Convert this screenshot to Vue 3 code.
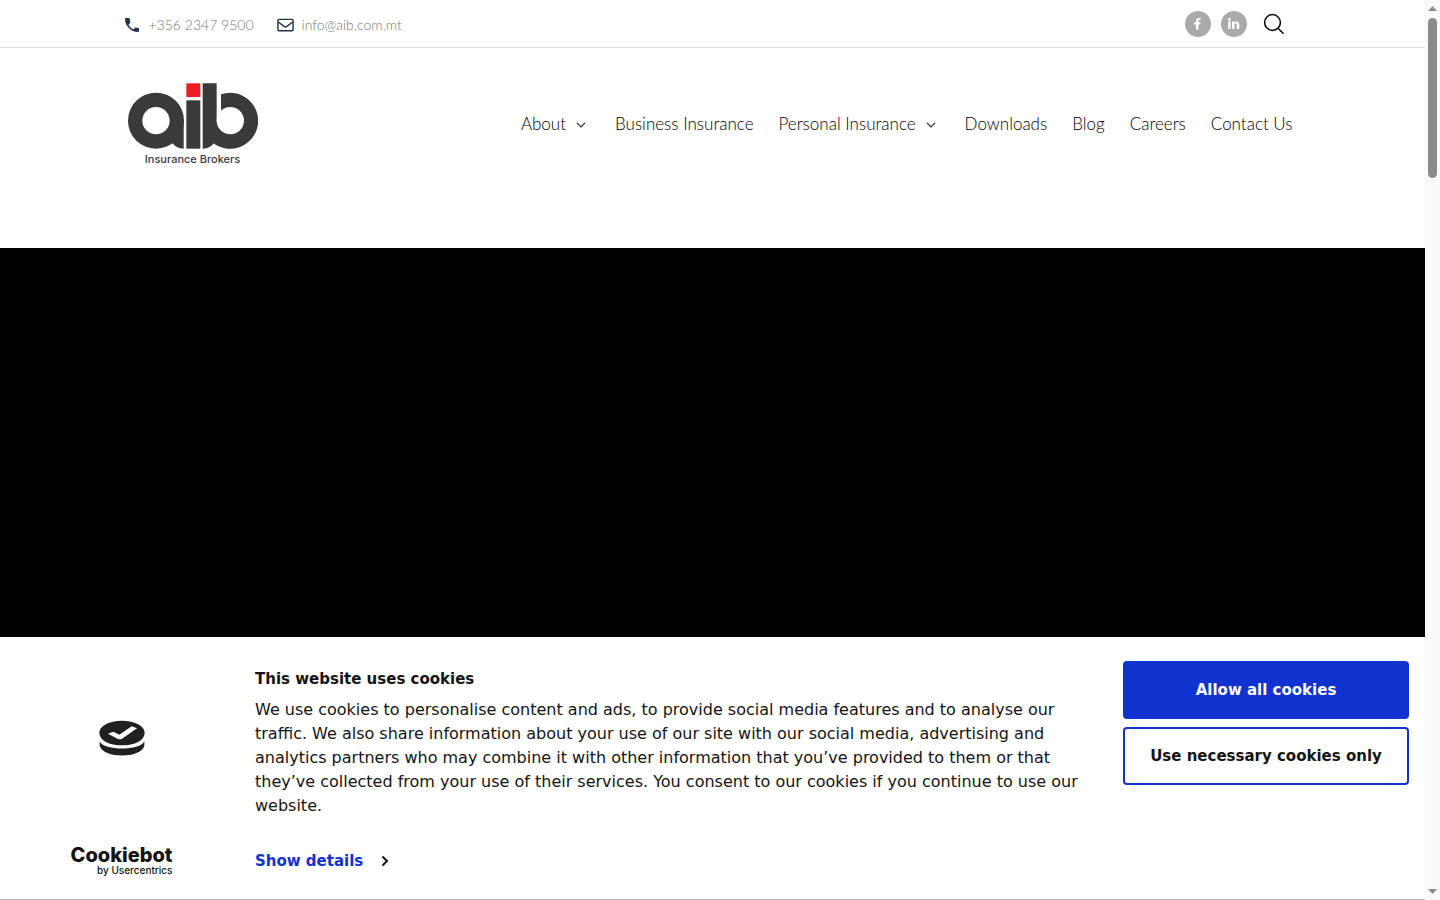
<template>
  <div class="window">
    <div class="page">
      <div class="top-bar">
        <div class="container top-inner">
          <div class="contacts">
            <a class="contact" href="tel:+35623479500">
              <svg class="phone-icon" viewBox="2 2 21.5 21.5" aria-hidden="true">
                <path
                  d="M3.5 2h4.500c.8 0 1.4.6 1.4 1.4 0 1.7.3 3.3.8 4.7.2.5.1 1.1-.3 1.5l-2.400 2.7c1.7 3.2 4.1 5.600 7.300 7.200l2.600-2.600c.4-.4 1-.5 1.500-.3 1.400.5 2.400.6 3.400.7.8 0 1.400.6 1.400 1.400V22c0 .8-.6 1.400-1.400 1.400C11 23.400 2 14 2 3.500 2 2.600 2.700 2 3.500 2z"
                  fill="currentColor"
                />
              </svg>
              +356 2347 9500
            </a>
            <a class="contact" href="mailto:info@aib.com.mt">
              <svg class="mail-icon" viewBox="0 0 18 14" aria-hidden="true">
                <rect x="1" y="1" width="16" height="12" rx="1" />
                <path d="M1 3.500 7.500 8.500Q9 9.600 10.500 8.500L17 3.500" />
              </svg>
              info@aib.com.mt
            </a>
          </div>
          <div class="tools">
            <a class="social" href="#facebook" aria-label="Facebook">
              <svg viewBox="0 0 26 26" aria-hidden="true">
                <path
                  d="M11 18.500v-5H9v-2.200h2V9.900c0-1.900 1-3 2.900-3h1.600v2.200h-1c-.8 0-1.100.3-1.100 1v1.200h2.200l-.3 2.200h-1.900v5z"
                />
              </svg>
            </a>
            <a class="social" href="#linkedin" aria-label="LinkedIn">
              <svg viewBox="0 0 26 26" aria-hidden="true">
                <circle cx="8.400" cy="8.500" r="1.400" />
                <path
                  d="M7.200 10.600h2.400V18H7.200zM11 10.600h2.300v1c.4-.7 1.200-1.200 2.200-1.200 2.100 0 2.700 1.400 2.700 3.300V18h-2.400v-3.900c0-1.100-.3-1.700-1.100-1.700-1 0-1.300.6-1.300 1.700V18H11z"
                />
              </svg>
            </a>
            <button class="search" type="button" aria-label="Search">
              <svg viewBox="0 0 22 22" aria-hidden="true">
                <circle cx="9.500" cy="9.500" r="7.900" />
                <path d="M15 15.200 20.600 20.800" />
              </svg>
            </button>
          </div>
        </div>
      </div>

      <header class="header">
        <div class="container header-inner">
          <a class="logo" href="#home" aria-label="aib Insurance Brokers">
            <svg viewBox="54 38 390 198" aria-hidden="true">
              <g fill="#3a3a3b">
                <circle cx="138" cy="151" r="84" />
                <path d="M175 151H221V235C205 235 195 228 187 218Z" />
                <path d="M229 90H271V235H229Z" />
                <path d="M278 39H320V200L312 218C304 228 294 235 278 235Z" />
                <path d="M333 72A84 84 0 1 1 312 220L319 151H333Z" />
              </g>
              <path d="M229 39H271V80H229Z" fill="#ee1c25" />
              <circle cx="138" cy="151" r="41" fill="#fff" />
              <circle cx="361" cy="151" r="41" fill="#fff" />
            </svg>
            <span>Insurance Brokers</span>
          </a>
          <nav class="nav">
            <a v-for="item in navItems" :key="item.label" :href="item.href">
              {{ item.label }}
              <svg v-if="item.menu" viewBox="0 0 10 10" aria-hidden="true">
                <path d="M1 4 5 8 9 4" />
              </svg>
            </a>
          </nav>
        </div>
      </header>

      <main class="hero"></main>

      <section class="cookies" aria-labelledby="cookie-title">
        <div class="brand">
          <svg class="cookie-mark" viewBox="0 0 138 108" aria-hidden="true">
            <path d="M2 64C14 93 124 93 136 64V77C126 116 12 116 2 77Z" />
            <path
              fill-rule="evenodd"
              d="M69 2C107 2 137 18 137 38C137 61 107 76 69 76C31 76 1 61 1 38C1 18 31 2 69 2ZM27 41L43 35L61 44L98 19L114 25L69 56Q62 60 55 56Z"
            />
          </svg>
          <a class="brand-name" href="#cookiebot">
            <strong>Cookiebot</strong>
            <span>by Usercentrics</span>
          </a>
        </div>
        <div class="message">
          <h2 id="cookie-title">This website uses cookies</h2>
          <p>
            We use cookies to personalise content and ads, to provide social media features and to
            analyse our traffic. We also share information about your use of our site with our
            social media, advertising and analytics partners who may combine it with other
            information that you’ve provided to them or that they’ve collected from your use of
            their services. You consent to our cookies if you continue to use our website.
          </p>
          <a class="details" href="#details">
            Show details
            <svg viewBox="0 0 8 12" aria-hidden="true">
              <path d="M1.500 1.500 6 6 1.500 10.500" />
            </svg>
          </a>
        </div>
        <div class="choices">
          <button class="choice primary" type="button">Allow all cookies</button>
          <button class="choice" type="button">Use necessary cookies only</button>
        </div>
      </section>
    </div>

    <div class="scrollbar" aria-hidden="true">
      <svg viewBox="0 0 9 5"><path d="M0 5 4.500 0 9 5Z" /></svg>
      <div class="track"><div class="thumb"></div></div>
      <svg viewBox="0 0 9 5"><path d="M0 0 4.500 5 9 0Z" /></svg>
    </div>
  </div>
</template>

<script setup>
const navItems = [
  { label: 'About', href: '#about', menu: true },
  { label: 'Business Insurance', href: '#business' },
  { label: 'Personal Insurance', href: '#personal', menu: true },
  { label: 'Downloads', href: '#downloads' },
  { label: 'Blog', href: '#blog' },
  { label: 'Careers', href: '#careers' },
  { label: 'Contact Us', href: '#contact' }
]
</script>

<style>
body {
  margin: 0;
}
</style>

<style scoped>
* {
  box-sizing: border-box;
}

a {
  color: inherit;
  text-decoration: none;
}

svg {
  display: block;
  flex-shrink: 0;
}

button {
  cursor: pointer;
}

.window {
  display: flex;
  min-height: 100vh;
  background: #ffffff;
  font-family: Lato, sans-serif;
}

.page {
  flex: 1;
  display: flex;
  flex-direction: column;
  border-bottom: 1px solid #b4b4b4;
}

.container {
  width: 100%;
  max-width: 1176px;
  margin: 0 auto;
}

.top-bar {
  border-bottom: 1px solid #dedede;
}

.top-inner {
  display: flex;
  justify-content: space-between;
  align-items: center;
  height: 47px;
}

.contacts {
  display: flex;
  gap: 23px;
  padding-top: 2px;
}

.contact {
  display: flex;
  align-items: center;
  gap: 8px;
  color: #777777;
  font-size: 14px;
  font-weight: 300;
}

.phone-icon {
  width: 14px;
  height: 14px;
  margin-right: 2px;
  color: #20344f;
}

.mail-icon {
  width: 17px;
  height: 14px;
  fill: none;
  stroke: #20344f;
  stroke-width: 1.5;
}

.tools {
  display: flex;
  align-items: center;
  gap: 10px;
  padding-right: 16px;
}

.social {
  width: 26px;
  height: 26px;
  border-radius: 50%;
  background: #aaaaaa;
}

.social svg {
  fill: #ffffff;
}

.search {
  margin-left: 6px;
  padding: 0;
  border: 0;
  background: transparent;
}

.search svg {
  width: 22px;
  height: 22px;
  fill: none;
  stroke: #000000;
  stroke-width: 1.5;
}

.header-inner {
  display: flex;
  justify-content: space-between;
  align-items: flex-start;
  height: 200px;
  padding: 35px 8px 0 3px;
}

.logo {
  display: flex;
  flex-direction: column;
  align-items: center;
  gap: 3px;
  color: #3a3a3b;
  font-family: Inter, sans-serif;
  font-size: 11px;
  font-weight: 500;
  line-height: 14px;
}

.logo svg {
  width: 130px;
  height: 66px;
}

.nav {
  display: flex;
  gap: 25px;
  padding-top: 29px;
  color: #000000;
  font-size: 17px;
  font-weight: 300;
  line-height: 24px;
}

.nav a {
  display: flex;
  align-items: center;
  gap: 10px;
  white-space: nowrap;
}

.nav svg {
  width: 10px;
  height: 10px;
  margin-right: 4px;
  fill: none;
  stroke: #333333;
  stroke-width: 1.2;
}

.hero {
  flex: 1;
  background: #000000;
}

.cookies {
  display: flex;
  align-items: stretch;
  min-height: 262px;
  padding: 24px 16px 22px 0;
  color: #141414;
  font-family: "DejaVu Sans", sans-serif;
  font-size: 15px;
  line-height: 24px;
}

.brand {
  width: 243px;
  display: flex;
  flex-direction: column;
  justify-content: space-between;
  align-items: center;
  padding-top: 59px;
}

.cookie-mark {
  width: 46px;
  height: 36px;
  fill: #202020;
}

.brand-name {
  display: flex;
  flex-direction: column;
  align-items: flex-end;
  padding-bottom: 1px;
  font-family: Inter, sans-serif;
  color: #141414;
}

.brand-name strong {
  font-size: 20px;
  font-weight: 800;
  line-height: 18px;
}

.brand-name span {
  font-size: 10px;
  font-weight: 500;
  line-height: 12px;
}

.message {
  flex: 1;
  padding: 6px 40px 0 12px;
}

.message h2 {
  margin: 0 0 7px;
  font-size: 15px;
  line-height: 24px;
}

.message p {
  margin: 0 0 31px;
  font-size: 16px;
}

.details {
  display: inline-flex;
  align-items: center;
  gap: 18px;
  color: #1032cf;
  font-weight: 700;
}

.details svg {
  width: 8px;
  height: 12px;
  fill: none;
  stroke: #141414;
  stroke-width: 2;
}

.choices {
  width: 286px;
  display: flex;
  flex-direction: column;
  gap: 8px;
}

.choice {
  height: 58px;
  border: 2px solid #1032cf;
  border-radius: 4px;
  background: #ffffff;
  color: #141414;
  font-family: inherit;
  font-size: 15px;
  font-weight: 700;
}

.choice.primary {
  background: #1032cf;
  color: #ffffff;
}

.scrollbar {
  width: 15px;
  display: flex;
  flex-direction: column;
  align-items: center;
  gap: 7px;
  padding: 6px 0;
  background: #fafafa;
}

.scrollbar svg {
  width: 9px;
  height: 5px;
  fill: #8b8b8b;
}

.track {
  flex: 1;
}

.thumb {
  width: 9px;
  height: 160px;
  border-radius: 5px;
  background: #8b8b8b;
}
</style>
